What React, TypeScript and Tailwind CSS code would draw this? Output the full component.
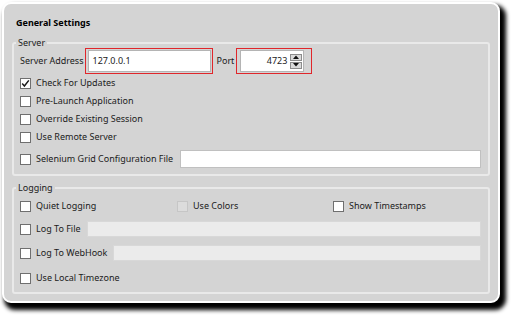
import React from "react";

function Box({ checked = false, disabled = false }: { checked?: boolean; disabled?: boolean }) {
  return (
    <span
      className={
        disabled
          ? "flex h-[11px] w-[11px] shrink-0 items-center justify-center border border-[#c6c6c6] bg-[#dcdcdc]"
          : "flex h-[11px] w-[11px] shrink-0 items-center justify-center border border-[#6f6f6f] bg-white"
      }
    >
      {checked && (
        <svg width="9" height="9" viewBox="0 0 9 9">
          <path d="M1.2 4.6 L3.4 7 L7.8 1.4" fill="none" stroke="#1a1a1a" strokeWidth="1.5" />
        </svg>
      )}
    </span>
  );
}

function Check({ label, checked = false, disabled = false }: { label: string; checked?: boolean; disabled?: boolean }) {
  return (
    <div className="flex items-center gap-[5px]">
      <Box checked={checked} disabled={disabled} />
      <span className="whitespace-nowrap">{label}</span>
    </div>
  );
}

export default function App() {
  return (
    <div className="h-[332px] w-[529px] overflow-hidden bg-white pl-[2px] pt-[2px] text-[9px] text-[#1b1b1b] [font-family:'Noto_Sans',sans-serif]">
      <div className="flex h-[301px] w-[498px] flex-col rounded-[9px] border-2 border-white bg-[#d4d4d4] px-[8px] pt-[11px] shadow-[4px_5px_4px_2px_rgba(0,0,0,1)]">
        <div className="pl-[4px] text-[9px] font-bold leading-[15px] text-black">General Settings</div>

        <fieldset className="mt-[6px] rounded-[3px] border-2 border-[#e9e9e9] pb-[4px] pl-[6px] pr-[7px]">
          <legend className="ml-[-4px] px-[2px] leading-[13px]">Server</legend>
          <div className="mt-[-1px] flex h-[26px] items-center">
            <span className="whitespace-nowrap">Server Address</span>
            <div className="ml-[1px] flex h-[26px] w-[128px] items-center border border-[#e0262b] py-[1px] pl-[2px] pr-[1px]">
              <div className="flex h-[22px] w-full items-center border border-[#b4b4b4] bg-white pl-[4px]">127.0.0.1</div>
            </div>
            <span className="ml-[4px]">Port</span>
            <div className="ml-[2px] flex h-[26px] w-[76px] items-center border border-[#e0262b] py-[1px] pl-[3px]">
              <div className="flex h-[22px] w-[64px] items-center border border-[#b4b4b4] bg-white">
                <span className="flex-1 pr-[3px] text-right">4723</span>
                <div className="mr-[1px] flex flex-col gap-[1px]">
                  <div className="flex h-[7px] w-[12px] items-center justify-center border border-[#8c8c8c] bg-[#dadada]">
                    <svg width="6" height="4" viewBox="0 0 6 4">
                      <path d="M0 4 L3 0.5 L6 4 Z" fill="#111" />
                    </svg>
                  </div>
                  <div className="flex h-[7px] w-[12px] items-center justify-center border border-[#8c8c8c] bg-[#dadada]">
                    <svg width="6" height="4" viewBox="0 0 6 4">
                      <path d="M0 0 L3 3.5 L6 0 Z" fill="#111" />
                    </svg>
                  </div>
                </div>
              </div>
            </div>
          </div>
          <div className="flex h-[18px] items-center">
            <Check label="Check For Updates" checked />
          </div>
          <div className="flex h-[18px] items-center">
            <Check label="Pre-Launch Application" />
          </div>
          <div className="flex h-[18px] items-center">
            <Check label="Override Existing Session" />
          </div>
          <div className="flex h-[18px] items-center">
            <Check label="Use Remote Server" />
          </div>
          <div className="mt-[2px] flex h-[22px] items-center gap-[7px]">
            <Check label="Selenium Grid Configuration File" />
            <div className="h-[18px] flex-1 border border-[#c0c0c0] bg-white" />
          </div>
        </fieldset>

        <fieldset className="mt-[5px] rounded-[3px] border-2 border-[#e9e9e9] pb-[5px] pl-[6px] pr-[7px]">
          <legend className="ml-[-4px] px-[2px] leading-[13px]">Logging</legend>
          <div className="mt-[3px] grid h-[18px] grid-cols-[157px_156px_1fr] items-center">
            <Check label="Quiet Logging" />
            <Check label="Use Colors" disabled />
            <Check label="Show Timestamps" />
          </div>
          <div className="mt-[5px] flex h-[18px] items-center gap-[6px]">
            <Check label="Log To File" />
            <div className="h-[16px] flex-1 border border-[#d8d8d8] bg-[#ebebeb]" />
          </div>
          <div className="mt-[6px] flex h-[18px] items-center gap-[6px]">
            <Check label="Log To WebHook" />
            <div className="h-[16px] flex-1 border border-[#d8d8d8] bg-[#ebebeb]" />
          </div>
          <div className="mt-[7px] flex h-[18px] items-center">
            <Check label="Use Local Timezone" />
          </div>
        </fieldset>
      </div>
    </div>
  );
}
